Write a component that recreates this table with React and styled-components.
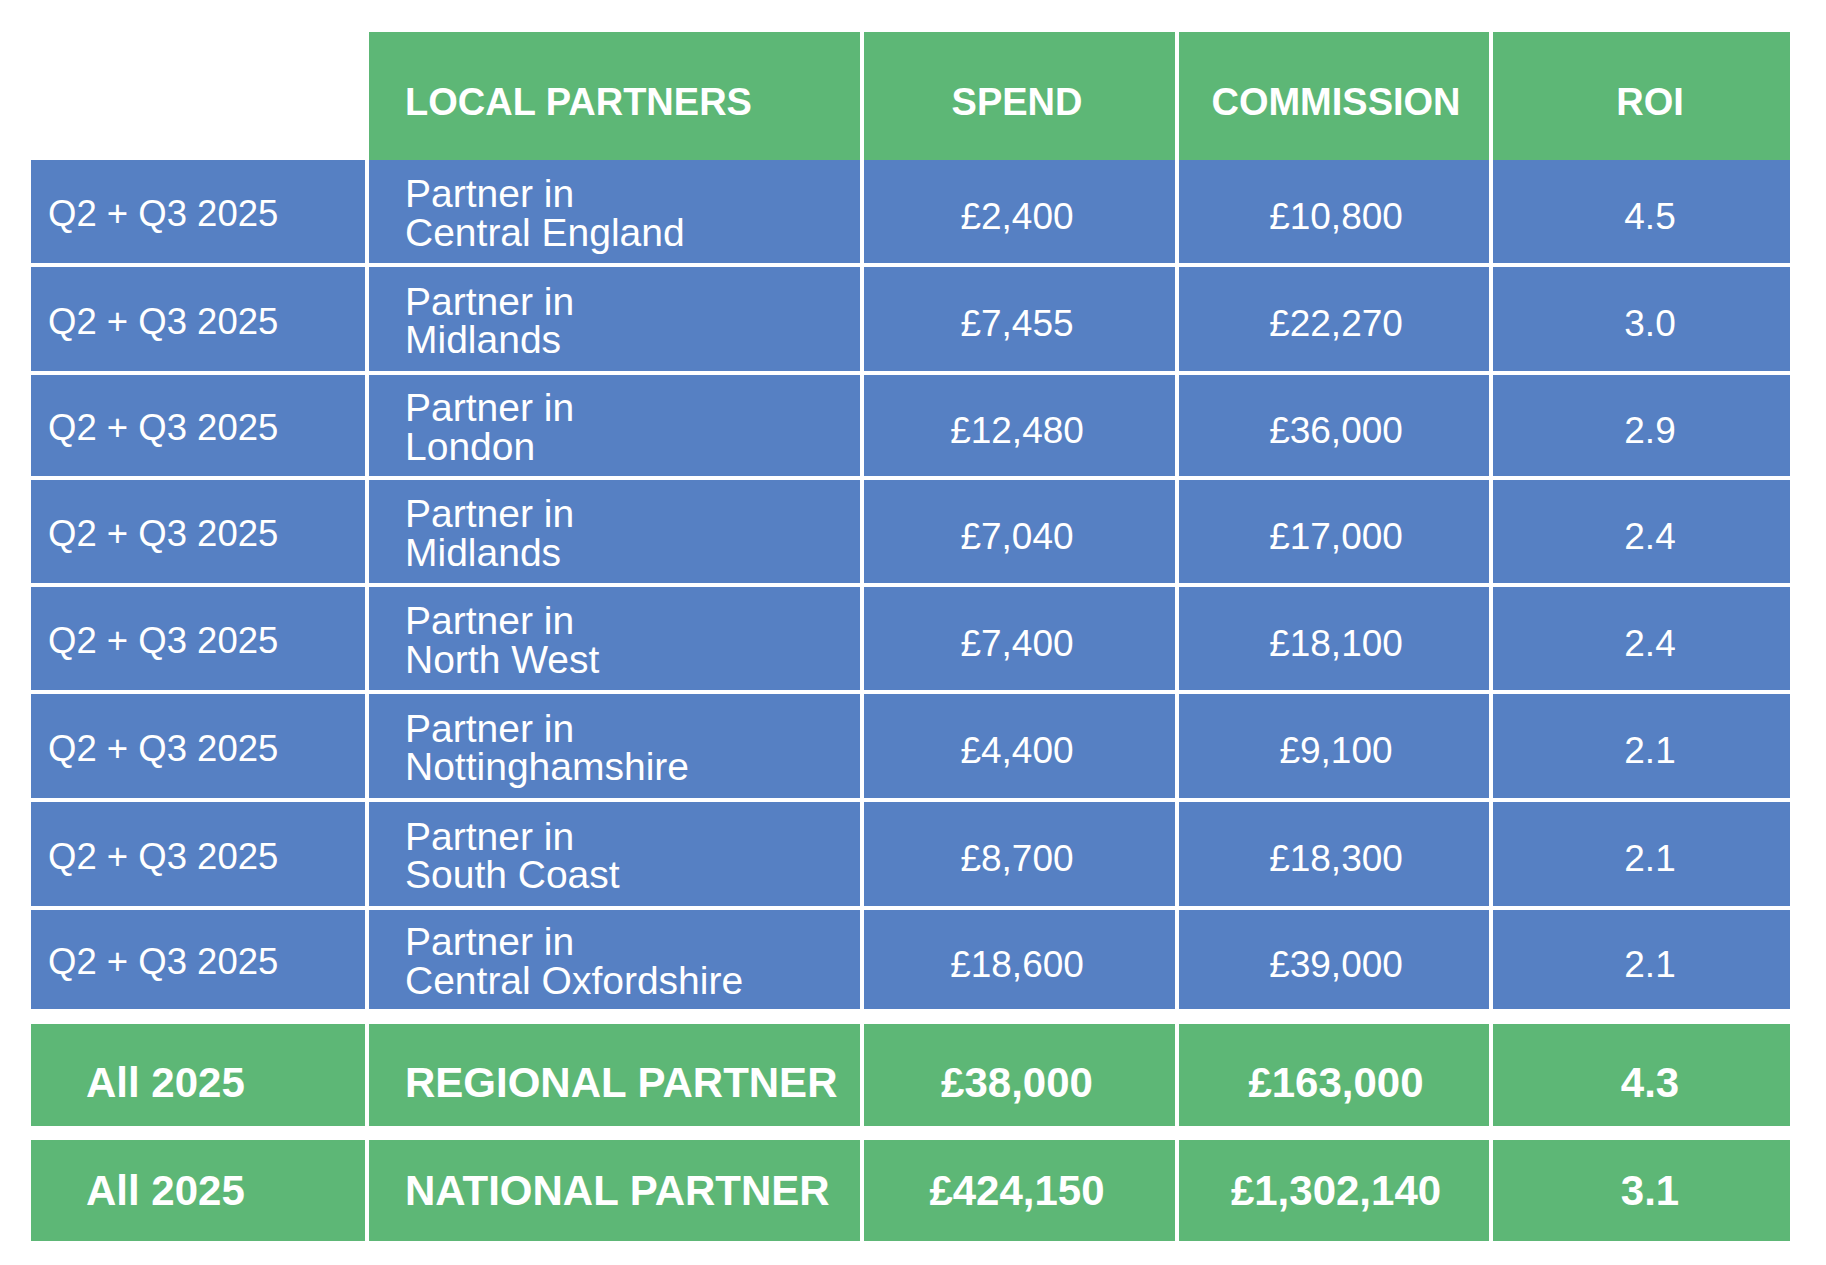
import React from "react";
import styled, { createGlobalStyle } from "styled-components";

const GREEN = "#5db776";
const BLUE = "#5680c3";
const COLS = "334px 491px 311px 310px 297px";

const Global = createGlobalStyle`
  html, body { margin: 0; padding: 0; background: #ffffff; }
  body { font-family: "Liberation Sans", Arial, Helvetica, sans-serif; }
`;

const Page = styled.div`
  width: 1826px;
  height: 1265px;
  box-sizing: border-box;
  padding: 32px 0 0 31px;
`;

const Table = styled.div`
  display: flex;
  flex-direction: column;
  width: 1759px;
`;

const HeaderRow = styled.div`
  display: grid;
  grid-template-columns: ${COLS};
  column-gap: 4px;
  height: 128px;
`;

const Body = styled.div`
  display: flex;
  flex-direction: column;
  gap: 4px;
`;

const Totals = styled.div`
  display: flex;
  flex-direction: column;
  gap: 14px;
  margin-top: 15px;
`;

const Row = styled.div`
  display: grid;
  grid-template-columns: ${COLS};
  column-gap: 4px;
  height: ${(p) => p.$h}px;
`;

const Cell = styled.div`
  box-sizing: border-box;
  background: ${(p) =>
    p.$tone === "green" ? GREEN : p.$tone === "blue" ? BLUE : "transparent"};
  color: #ffffff;
  display: flex;
  flex-direction: column;
  justify-content: center;
  align-items: ${(p) => (p.$center ? "center" : "flex-start")};
  padding-left: ${(p) => p.$pl || 0}px;
  padding-right: ${(p) => p.$pr || 0}px;
  padding-top: ${(p) => p.$pt || 0}px;
  white-space: nowrap;
`;

const HeadText = styled.span`
  font-weight: 700;
  font-size: 38px;
  line-height: 1;
`;

const PeriodText = styled.span`
  font-size: 36.5px;
  line-height: 1;
`;

const PartnerText = styled.span`
  display: block;
  font-size: 39px;
  line-height: 38.5px;
`;

const ValueText = styled.span`
  font-size: 37px;
  line-height: 1;
`;

const TotalText = styled.span`
  font-weight: 700;
  font-size: 42px;
  line-height: 1;
`;

const colLayout = [
  { center: false, pl: 17 },
  { center: false, pl: 36 },
  { center: true, pr: 5 },
  { center: true, pl: 4 },
  { center: true, pl: 17 },
];

const headers = ["", "LOCAL PARTNERS", "SPEND", "COMMISSION", "ROI"];

const rows = [
  { region: "Central England", spend: "£2,400", commission: "£10,800", roi: "4.5", h: 103 },
  { region: "Midlands", spend: "£7,455", commission: "£22,270", roi: "3.0", h: 104 },
  { region: "London", spend: "£12,480", commission: "£36,000", roi: "2.9", h: 101 },
  { region: "Midlands", spend: "£7,040", commission: "£17,000", roi: "2.4", h: 103 },
  { region: "North West", spend: "£7,400", commission: "£18,100", roi: "2.4", h: 103 },
  { region: "Nottinghamshire", spend: "£4,400", commission: "£9,100", roi: "2.1", h: 104 },
  { region: "South Coast", spend: "£8,700", commission: "£18,300", roi: "2.1", h: 104 },
  { region: "Central Oxfordshire", spend: "£18,600", commission: "£39,000", roi: "2.1", h: 99 },
];

const totals = [
  { label: "REGIONAL PARTNER", spend: "£38,000", commission: "£163,000", roi: "4.3", h: 102, pt: 16 },
  { label: "NATIONAL PARTNER", spend: "£424,150", commission: "£1,302,140", roi: "3.1", h: 101, pt: 0 },
];

export default function App() {
  return (
    <>
      <Global />
      <Page>
        <Table>
          <HeaderRow>
            {headers.map((h, i) => (
              <Cell
                key={i}
                $tone={i === 0 ? "none" : "green"}
                $center={colLayout[i].center}
                $pl={colLayout[i].pl}
                $pr={colLayout[i].pr}
                $pt={12}
              >
                <HeadText>{h}</HeadText>
              </Cell>
            ))}
          </HeaderRow>
          <Body>
            {rows.map((r, idx) => (
              <Row key={idx} $h={r.h}>
                <Cell $tone="blue" $pl={colLayout[0].pl} $pt={6}>
                  <PeriodText>Q2 + Q3 2025</PeriodText>
                </Cell>
                <Cell $tone="blue" $pl={colLayout[1].pl} $pt={4}>
                  <PartnerText>
                    Partner in
                    <br />
                    {r.region}
                  </PartnerText>
                </Cell>
                <Cell $tone="blue" $center $pr={colLayout[2].pr} $pt={9}>
                  <ValueText>{r.spend}</ValueText>
                </Cell>
                <Cell $tone="blue" $center $pl={colLayout[3].pl} $pt={9}>
                  <ValueText>{r.commission}</ValueText>
                </Cell>
                <Cell $tone="blue" $center $pl={colLayout[4].pl} $pt={9}>
                  <ValueText>{r.roi}</ValueText>
                </Cell>
              </Row>
            ))}
          </Body>
          <Totals>
            {totals.map((t, idx) => (
              <Row key={idx} $h={t.h}>
                <Cell $tone="green" $pl={55} $pt={t.pt}>
                  <TotalText>All 2025</TotalText>
                </Cell>
                <Cell $tone="green" $pl={colLayout[1].pl} $pt={t.pt}>
                  <TotalText>{t.label}</TotalText>
                </Cell>
                <Cell $tone="green" $center $pr={colLayout[2].pr} $pt={t.pt}>
                  <TotalText>{t.spend}</TotalText>
                </Cell>
                <Cell $tone="green" $center $pl={colLayout[3].pl} $pt={t.pt}>
                  <TotalText>{t.commission}</TotalText>
                </Cell>
                <Cell $tone="green" $center $pl={colLayout[4].pl} $pt={t.pt}>
                  <TotalText>{t.roi}</TotalText>
                </Cell>
              </Row>
            ))}
          </Totals>
        </Table>
      </Page>
    </>
  );
}
